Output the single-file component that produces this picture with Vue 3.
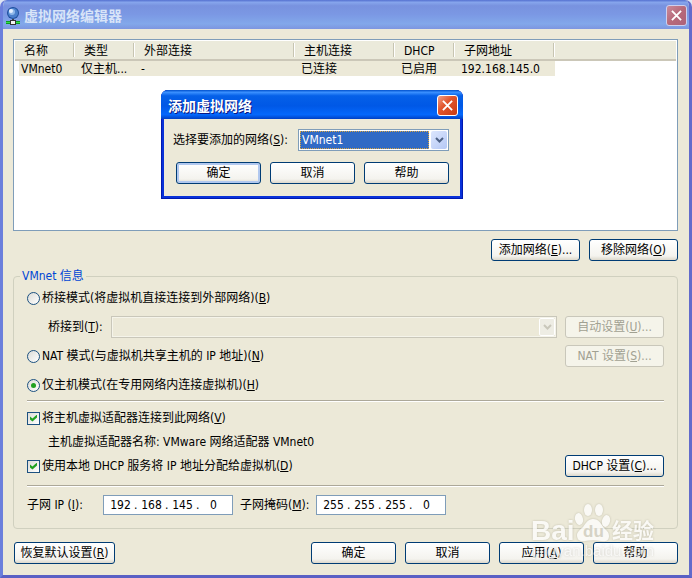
<template>
  <main class="window">
    <header class="title-bar">
      <svg class="title-icon" viewBox="0 0 14 18" aria-hidden="true">
        <circle cx="7" cy="6" r="6" fill="#1f4f9c" />
        <circle cx="7" cy="6" r="5" fill="#4a80cc" />
        <circle cx="6" cy="5" r="3" fill="#8fb8ea" />
        <circle cx="5" cy="4" r="2" fill="#e4f0ff" />
        <path d="M6 12h2v2H6z" fill="#444" />
        <path d="M0 14h14v3H0z" fill="#0c9a22" />
        <path d="M0 15h14v1H0z" fill="#35e04a" />
        <path d="M4 13h6v5H4z" fill="#333" />
        <path d="M5 14h4v3H5z" fill="#f4f4f4" />
      </svg>
      <h1>虚拟网络编辑器</h1>
      <button type="button" class="close-button is-inactive" aria-label="关闭">
        <svg viewBox="0 0 12 12" aria-hidden="true"><path d="M1 1 11 11M11 1 1 11" /></svg>
      </button>
    </header>

    <div class="content">
      <div class="network-list">
        <table>
          <colgroup>
            <col v-for="column in columns" :key="column.label" :style="{ width: column.width + 'px' }" />
            <col />
          </colgroup>
          <thead>
            <tr>
              <th v-for="column in columns" :key="column.label">{{ column.label }}</th>
              <th class="filler"></th>
            </tr>
          </thead>
          <tbody>
            <tr v-for="network in networks" :key="network[0]">
              <td v-for="(cell, index) in network" :key="index">{{ cell }}</td>
              <td class="filler"></td>
            </tr>
          </tbody>
        </table>
      </div>

      <div class="list-actions">
        <button type="button" class="button">添加网络(<u>E</u>)...</button>
        <button type="button" class="button">移除网络(<u>O</u>)</button>
      </div>

      <fieldset class="info">
        <legend>VMnet 信息</legend>

        <div class="group">
          <div class="row">
            <label class="choice">
              <input v-model="mode" type="radio" name="mode" value="bridged" />
              <span>桥接模式(将虚拟机直接连接到外部网络)(<u>B</u>)</span>
            </label>
          </div>
          <div class="row indent">
            <label for="bridge">桥接到(<u>T</u>):</label>
            <span class="combo is-disabled">
              <select id="bridge" disabled></select>
              <span class="combo-arrow">
                <svg viewBox="0 0 9 6" aria-hidden="true"><path d="M1 1 4.500 4.500 8 1" /></svg>
              </span>
            </span>
            <button type="button" class="button wide" disabled>自动设置(<u>U</u>)...</button>
          </div>
          <div class="row">
            <label class="choice">
              <input v-model="mode" type="radio" name="mode" value="nat" />
              <span>NAT 模式(与虚拟机共享主机的 IP 地址)(<u>N</u>)</span>
            </label>
            <button type="button" class="button wide" disabled>NAT 设置(<u>S</u>)...</button>
          </div>
          <div class="row">
            <label class="choice">
              <input v-model="mode" type="radio" name="mode" value="hostonly" />
              <span>仅主机模式(在专用网络内连接虚拟机)(<u>H</u>)</span>
            </label>
          </div>
        </div>

        <hr />

        <div class="group tight">
          <div class="row">
            <label class="choice">
              <input v-model="connectAdapter" type="checkbox" />
              <span>将主机虚拟适配器连接到此网络(<u>V</u>)</span>
            </label>
          </div>
          <div class="row indent">主机虚拟适配器名称: VMware 网络适配器 VMnet0</div>
          <div class="row">
            <label class="choice">
              <input v-model="useDhcp" type="checkbox" />
              <span>使用本地 DHCP 服务将 IP 地址分配给虚拟机(<u>D</u>)</span>
            </label>
            <button type="button" class="button wide">DHCP 设置(<u>C</u>)...</button>
          </div>
        </div>

        <hr />

        <div class="addresses">
          <template v-for="address in addresses" :key="address.id">
            <label :for="address.id">{{ address.label }}(<u>{{ address.accessKey }}</u>):</label>
            <span class="ip-field">
              <template v-for="(part, index) in address.parts" :key="index">
                <span v-if="index > 0">.</span>
                <input
                  :id="index === 0 ? address.id : undefined"
                  v-model="address.parts[index]"
                  type="text"
                  maxlength="3"
                  :aria-label="address.label"
                />
              </template>
            </span>
          </template>
        </div>
      </fieldset>

      <footer class="footer">
        <button type="button" class="button restore">恢复默认设置(<u>R</u>)</button>
        <button type="button" class="button">确定</button>
        <button type="button" class="button">取消</button>
        <button type="button" class="button">应用(<u>A</u>)</button>
        <button type="button" class="button">帮助</button>
      </footer>
    </div>

    <section class="dialog" role="dialog" aria-labelledby="dialog-title">
      <header class="dialog-title">
        <h2 id="dialog-title">添加虚拟网络</h2>
        <button type="button" class="close-button" aria-label="关闭">
          <svg viewBox="0 0 12 12" aria-hidden="true"><path d="M1 1 11 11M11 1 1 11" /></svg>
        </button>
      </header>
      <div class="dialog-body">
        <div class="dialog-row">
          <label for="network">选择要添加的网络(<u>S</u>):</label>
          <span class="combo">
            <select id="network" v-model="selectedNetwork">
              <option>VMnet1</option>
            </select>
            <span class="combo-arrow">
              <svg viewBox="0 0 9 6" aria-hidden="true"><path d="M1 1 4.500 4.500 8 1" /></svg>
            </span>
          </span>
        </div>
        <div class="dialog-buttons">
          <button type="button" class="button is-default">确定</button>
          <button type="button" class="button">取消</button>
          <button type="button" class="button">帮助</button>
        </div>
      </div>
    </section>

    <svg class="watermark" viewBox="0 0 126 62" aria-hidden="true">
      <g class="mark">
        <text x="-2" y="40" class="brand">Bai</text>
        <ellipse cx="46" cy="19" rx="4" ry="6" transform="rotate(-12 46 19)" />
        <ellipse cx="55" cy="10" rx="4" ry="6" />
        <ellipse cx="66" cy="10" rx="4" ry="6" />
        <ellipse cx="73" cy="21" rx="4" ry="6" transform="rotate(14 73 21)" />
        <path d="M60 19c6 0 8 5 11 9 3 3 5 4 5 8 0 5-4 6-8 5-5-1-11-1-16 0-5 1-8-1-8-6 0-3 3-5 6-8 3-4 5-8 10-8Z" />
        <text x="79" y="38" class="brand-cjk">经验</text>
      </g>
      <text x="50" y="37" class="brand-du">du</text>
      <text x="0" y="56" class="site">jingyan.baidu.com</text>
    </svg>
  </main>
</template>

<script setup>
import { reactive, ref } from "vue";

const columns = [
  { label: "名称", width: 60 },
  { label: "类型", width: 60 },
  { label: "外部连接", width: 160 },
  { label: "主机连接", width: 100 },
  { label: "DHCP", width: 60 },
  { label: "子网地址", width: 100 }
];

const networks = [["VMnet0", "仅主机...", "-", "已连接", "已启用", "192.168.145.0"]];

const mode = ref("hostonly");
const connectAdapter = ref(true);
const useDhcp = ref(true);
const selectedNetwork = ref("VMnet1");

const addresses = reactive([
  { id: "subnet-ip", label: "子网 IP ", accessKey: "I", parts: ["192", "168", "145", "0"] },
  { id: "subnet-mask", label: "子网掩码", accessKey: "M", parts: ["255", "255", "255", "0"] }
]);
</script>

<style>
body {
  background: #dfe5f3;
}
</style>

<style scoped>
.window {
  position: relative;
  display: flex;
  box-sizing: border-box;
  min-height: 100vh;
  flex-direction: column;
  overflow: hidden;
  border: solid #6b7fdc;
  border-width: 0 3px 3px;
  border-right-color: #626bcb;
  border-bottom-color: #5960c4;
  border-radius: 7px 7px 0 0;
  background: #ece9d8;
  color: #000000;
  font-family: "DejaVu Sans Condensed", "Noto Sans", "Noto Sans CJK SC", sans-serif;
  font-size: 12px;
  line-height: 14px;
}

.window *,
.window *::after {
  box-sizing: border-box;
}

button,
input,
select {
  margin: 0;
  font: inherit;
}

.title-bar {
  display: flex;
  height: 29px;
  flex-shrink: 0;
  align-items: center;
  gap: 4px;
  margin: 0 -3px;
  padding: 2px 5px 0 6px;
  background: linear-gradient(180deg, #5470d0 0%, #86a5ec 8%, #7892df 20%, #7b98e4 50%, #82a8ea 82%, #7d96e0 100%);
}

.title-icon {
  width: 14px;
  height: 18px;
}

h1,
h2 {
  flex: 1;
  margin: 0;
  font-size: 14px;
  font-weight: 700;
  line-height: 18px;
}

h1 {
  color: #d8e4f8;
}

.close-button {
  display: flex;
  width: 21px;
  height: 21px;
  align-items: center;
  justify-content: center;
  padding: 0;
  border: 1px solid #ffffff;
  border-radius: 3px;
  background: linear-gradient(135deg, #f0a088 0%, #e2562e 40%, #c83a14 100%);
}

.close-button.is-inactive {
  border-color: #ced0ee;
  background: linear-gradient(135deg, #c98b9b 0%, #b7697a 50%, #ad6278 100%);
}

.close-button svg {
  width: 11px;
  height: 11px;
  fill: none;
  stroke: #ffffff;
  stroke-width: 2;
}

.content {
  display: flex;
  flex: 1;
  flex-direction: column;
  padding: 10px 11px 11px 10px;
}

.network-list {
  min-height: 192px;
  flex: 1;
  padding: 0 1px;
  border: 1px solid #7f9db9;
  background: #ffffff;
}

table {
  width: 100%;
  border-collapse: separate;
  border-spacing: 0;
  table-layout: fixed;
}

th,
td {
  overflow: hidden;
  font-weight: 400;
  text-align: left;
  white-space: nowrap;
}

th {
  position: relative;
  height: 21px;
  padding: 2px 0 0 9px;
  border-top: 1px solid #ffffff;
  border-bottom: 2px solid #cbc7b8;
  background: #ebeadb;
}

th:not(.filler)::after {
  position: absolute;
  top: 2px;
  right: 0;
  bottom: 2px;
  width: 2px;
  border-right: 1px solid #ffffff;
  background: #c7c5b2;
  content: "";
}

td {
  height: 15px;
  padding: 0 0 0 6px;
  background: #ece9d8;
}

td:first-child {
  border-left: 4px solid #ffffff;
  padding-left: 2px;
}

td.filler {
  background: #ffffff;
}

.list-actions {
  display: flex;
  justify-content: flex-end;
  gap: 9px;
  padding: 8px 0;
}

.button {
  width: 85px;
  height: 22px;
  padding: 0;
  border: 1px solid #003c74;
  border-radius: 3px;
  background: linear-gradient(180deg, #ffffff 0%, #f4f3ee 80%, #dcd8cc 100%);
  color: #000000;
  line-height: 14px;
  text-align: center;
  white-space: nowrap;
}

.button:disabled {
  border-color: #c9c7ba;
  background: #f5f4ea;
  color: #a1a192;
}

.button.is-default {
  box-shadow: inset 0 0 0 2px #b1c8ef;
}

.list-actions .button {
  width: 89px;
}

.button.wide {
  width: 99px;
  flex-shrink: 0;
  margin-left: auto;
}

.info {
  min-width: 0;
  margin: 0;
  padding: 4px 13px 13px;
  border: 1px solid #d0d0bf;
  border-radius: 4px;
}

legend {
  height: 14px;
  margin-left: -7px;
  padding: 0 2px;
  color: #0046d5;
}

.group {
  display: flex;
  flex-direction: column;
  gap: 7px;
}

.group.tight {
  gap: 2px;
  padding-bottom: 4px;
}

.row {
  display: flex;
  min-height: 22px;
  align-items: center;
  gap: 8px;
}

.row.indent {
  padding-left: 21px;
}

.choice {
  display: flex;
  align-items: center;
  gap: 2px;
}

.choice input {
  display: grid;
  width: 13px;
  height: 13px;
  flex-shrink: 0;
  place-content: center;
  appearance: none;
  border: 1px solid #1c5180;
  background: linear-gradient(135deg, #dcdcd7, #ffffff);
}

.choice input[type="radio"] {
  border-radius: 50%;
}

.choice input[type="radio"]:checked::after {
  width: 5px;
  height: 5px;
  border-radius: 50%;
  background: #21a121;
  content: "";
}

.choice input[type="checkbox"]:checked::after {
  width: 7px;
  height: 7px;
  background: #21a121;
  clip-path: polygon(0 28%, 35% 58%, 100% 0, 100% 44%, 35% 100%, 0 72%);
  content: "";
}

hr {
  height: 2px;
  margin: 4px 0 5px;
  border: 0;
  border-top: 1px solid #aca899;
  border-bottom: 1px solid #ffffff;
}

.combo {
  display: flex;
  height: 22px;
  min-width: 0;
  flex: 1;
  padding: 1px;
  border: 1px solid #7f9db9;
  background: #ffffff;
}

.combo select {
  min-width: 0;
  flex: 1;
  padding: 0 1px;
  appearance: none;
  border: 1px dotted #d9a441;
  border-radius: 0;
  outline: none;
  background: #316ac5;
  color: #ffffff;
  line-height: 14px;
}

.combo-arrow {
  display: flex;
  width: 16px;
  align-items: center;
  justify-content: center;
  margin-left: 2px;
  border-radius: 2px;
  background: linear-gradient(135deg, #dce6fd, #b5c8f5);
}

.combo-arrow svg {
  width: 9px;
  height: 6px;
  fill: none;
  stroke: #4d6185;
  stroke-width: 2;
}

.combo.is-disabled {
  border-color: #c9c7ba;
  background: #ece9d8;
  box-shadow: inset 0 0 0 1px #f5f4ea;
}

.combo.is-disabled select {
  border-color: transparent;
  background: transparent;
}

.combo.is-disabled .combo-arrow {
  border: 1px solid #ffffff;
  background: #eeede4;
}

.combo.is-disabled .combo-arrow svg {
  stroke: #c9c7ba;
}

.addresses {
  display: flex;
  align-items: center;
  padding-top: 3px;
}

.addresses label {
  width: 76px;
  flex-shrink: 0;
  white-space: nowrap;
}

.ip-field {
  display: flex;
  width: 130px;
  height: 20px;
  align-items: center;
  margin-right: 7px;
  padding: 0 3px;
  border: 1px solid #7f9db9;
  background: #ffffff;
}

.ip-field input {
  width: 27px;
  padding: 0;
  border: 0;
  outline: none;
  background: transparent;
  text-align: center;
}

.ip-field span {
  width: 4px;
}

.footer {
  display: flex;
  gap: 9px;
  padding: 13px 0 0 1px;
}

.footer .restore {
  width: 101px;
  margin-right: auto;
}

.dialog {
  position: absolute;
  top: 90px;
  left: 158px;
  width: 302px;
  padding: 0 3px 3px;
  border-radius: 7px 7px 0 0;
  background: #0831d9;
  box-shadow: inset 0 0 0 1px #0019b0;
}

.dialog-title {
  display: flex;
  height: 29px;
  align-items: center;
  margin: 0 -3px;
  padding: 2px 5px 0 7px;
  border-radius: 7px 7px 0 0;
  background: linear-gradient(180deg, #0050cc 0%, #3a90ff 8%, #0560e8 20%, #0058e6 55%, #0468fc 85%, #0040c4 100%);
}

h2 {
  color: #ffffff;
  text-shadow: 1px 1px #0a1883;
}

.dialog-body {
  padding: 10px 11px 12px 9px;
  background: #ece9d8;
}

.dialog-row {
  display: flex;
  align-items: center;
  gap: 8px;
}

.dialog-row label {
  flex: none;
  width: 117px;
  white-space: nowrap;
}

.dialog-buttons {
  display: flex;
  justify-content: flex-end;
  gap: 9px;
  padding-top: 11px;
}

.watermark {
  position: absolute;
  right: 30px;
  bottom: 13px;
  width: 126px;
  height: 62px;
  overflow: visible;
  pointer-events: none;
}

.mark {
  fill: #ffffff;
  opacity: 0.75;
  filter: drop-shadow(0 0 1px rgba(140, 136, 120, 0.6));
}

.brand {
  font-family: "Liberation Sans", sans-serif;
  font-size: 28px;
  font-weight: 700;
}

.brand-cjk {
  font-family: "Noto Sans CJK SC", sans-serif;
  font-size: 21px;
  font-weight: 700;
}

.brand-du {
  fill: #d6d3c6;
  font-family: "Liberation Sans", sans-serif;
  font-size: 17px;
  font-weight: 700;
}

.site {
  fill: rgba(255, 255, 255, 0.7);
  font-family: "Liberation Sans", sans-serif;
  font-size: 15px;
  filter: drop-shadow(0 0 1px rgba(140, 136, 120, 0.5));
}
</style>
